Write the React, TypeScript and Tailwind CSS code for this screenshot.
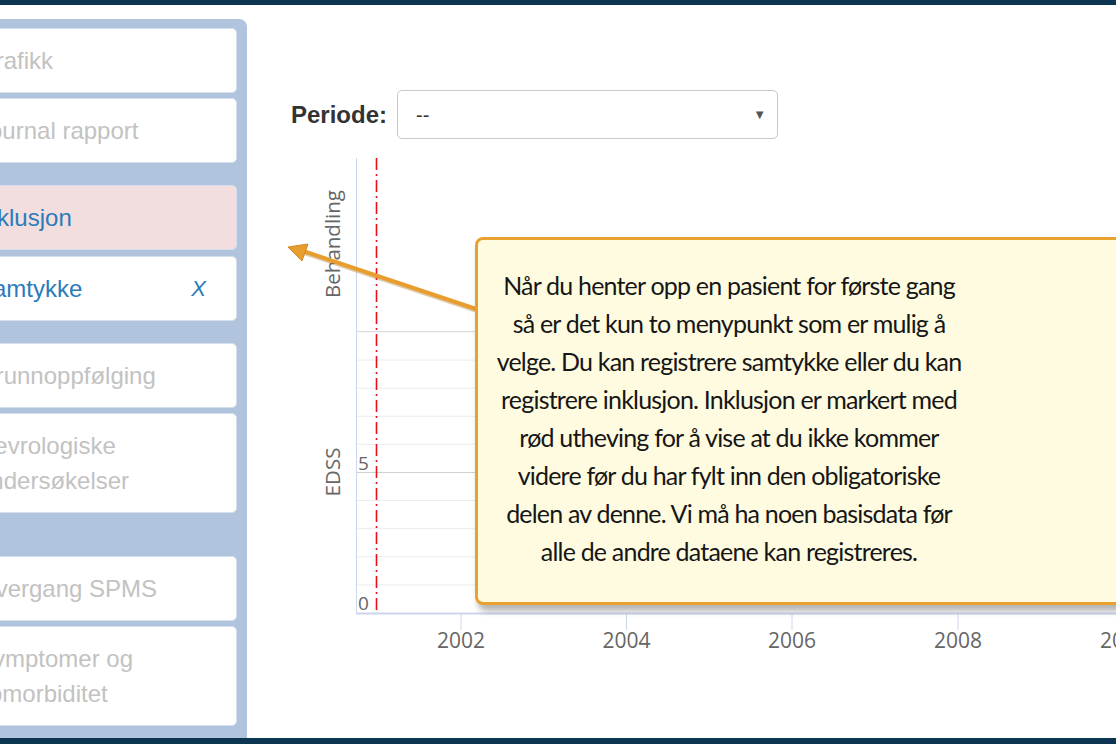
import React from "react";

type NavItem = {
  lines: string[];
  tone: "muted" | "active" | "danger";
  removable?: boolean;
};

// groups of menu cards, with the blue gap above each group
const GROUPS: { gap: string; space: string; items: NavItem[] }[] = [
  {
    gap: "mt-[9px]",
    space: "mt-[5px]",
    items: [
      { lines: ["Grafikk"], tone: "muted" },
      { lines: ["Journal rapport"], tone: "muted" },
    ],
  },
  {
    gap: "mt-[22px]",
    space: "mt-[6px]",
    items: [
      { lines: ["Inklusjon"], tone: "danger" },
      { lines: ["Samtykke"], tone: "active", removable: true },
    ],
  },
  {
    gap: "mt-[22px]",
    space: "mt-[5px]",
    items: [
      { lines: ["Grunnoppfølging"], tone: "muted" },
      { lines: ["Nevrologiske", "undersøkelser"], tone: "muted" },
    ],
  },
  {
    gap: "mt-[43px]",
    space: "mt-[5px]",
    items: [
      { lines: ["Overgang SPMS"], tone: "muted" },
      { lines: ["Symptomer og", "komorbiditet"], tone: "muted" },
    ],
  },
];

const CALLOUT = [
  "Når du henter opp en pasient for første gang",
  "så er det kun to menypunkt som er mulig å",
  "velge. Du kan registrere samtykke eller du kan",
  "registrere inklusjon. Inklusjon er markert med",
  "rød utheving for å vise at du ikke kommer",
  "videre før du har fylt inn den obligatoriske",
  "delen av denne. Vi må ha noen basisdata før",
  "alle de andre dataene kan registreres.",
];

const YEARS = [
  { label: "2002", x: 461 },
  { label: "2004", x: 626.5 },
  { label: "2006", x: 792 },
  { label: "2008", x: 958 },
  { label: "2010", x: 1124 },
];

function NavCard({ item, space }: { item: NavItem; space: string }) {
  const bg = item.tone === "danger" ? "bg-[#f2dede]" : "bg-white";
  const color = item.tone === "muted" ? "text-[#c2c2c2]" : "text-[#2b7bba]";
  return (
    <div
      className={`${space} ${bg} ${color} rounded-[5px] border border-[#d5dfeb] pl-[16px] pr-[30px] py-[14px] flex items-center justify-between text-[24px] leading-[35px]`}
    >
      <div>
        {item.lines.map((l) => (
          <div key={l} className="whitespace-nowrap">
            {l}
          </div>
        ))}
      </div>
      {item.removable && <span className="italic text-[22px]">X</span>}
    </div>
  );
}

function Chart() {
  const grid = Array.from({ length: 10 }, (_, i) => 613 - (i + 1) * 28.1);
  return (
    <svg width="825" height="520" className="block overflow-visible">
      <g transform="translate(-291,-150)" fontFamily="'Open Sans', sans-serif">
        {/* behandling band bottom */}
        <line x1="356" y1="331.5" x2="1116" y2="331.5" stroke="#cfcfcf" />
        {grid.map((y, i) => (
          <line
            key={i}
            x1="356"
            y1={y}
            x2="1116"
            y2={y}
            stroke={i === 4 ? "#d0d0d0" : "#ececec"}
          />
        ))}
        <line x1="356.5" y1="158" x2="356.5" y2="613" stroke="#ccd6eb" />
        <line x1="356" y1="613.5" x2="1116" y2="613.5" stroke="#ccd6eb" strokeWidth="2" />
        {YEARS.map((t) => (
          <g key={t.label}>
            <line x1={t.x} y1="614" x2={t.x} y2="630" stroke="#ccd6eb" />
            <text x={t.x} y="648" textAnchor="middle" fontSize="21" fill="#666">
              {t.label}
            </text>
          </g>
        ))}
        <line
          x1="376.5"
          y1="158"
          x2="376.5"
          y2="613"
          stroke="#e8101a"
          strokeWidth="1.6"
          strokeDasharray="12 4 2 4"
        />
        <text x="358" y="470" fontSize="19" fill="#666">
          5
        </text>
        <text x="358" y="610" fontSize="19" fill="#666">
          0
        </text>
        <text
          transform="translate(340,244) rotate(-90)"
          textAnchor="middle"
          fontSize="20.5"
          fill="#666"
        >
          Behandling
        </text>
        <text
          transform="translate(340,472) rotate(-90)"
          textAnchor="middle"
          fontSize="20.5"
          fill="#666"
        >
          EDSS
        </text>
      </g>
    </svg>
  );
}

export default function App() {
  return (
    <div className="relative w-[1116px] h-[744px] overflow-hidden bg-white flex flex-col font-['Liberation_Sans',Arial,sans-serif]">
      <div className="h-[5px] shrink-0 bg-[#0c3552]" />

      <div className="flex flex-1 min-h-0">
        {/* left menu, scrolled so its left edge is cut */}
        <aside className="mt-[14px] w-[247px] shrink-0 bg-[#b0c4de] rounded-tr-[8px] overflow-hidden">
          <div className="-ml-[40px] w-[277px] flex flex-col">
            {GROUPS.map((g, gi) => (
              <div key={gi} className={g.gap}>
                {g.items.map((it, i) => (
                  <NavCard key={it.lines[0]} item={it} space={i === 0 ? "" : g.space} />
                ))}
              </div>
            ))}
          </div>
        </aside>

        <main className="flex-1 pl-[44px]">
          <div className="mt-[85px] flex items-center gap-[10px]">
            <span className="font-bold text-[24px] text-[#333]">Periode:</span>
            <div className="w-[381px] h-[49px] rounded-[5px] border border-[#c8c8c8] flex items-center justify-between pl-[18px] pr-[11px] text-[20px] text-[#333]">
              <span>--</span>
              <span className="text-[13px] text-[#555]">▼</span>
            </div>
          </div>
          <div className="mt-[11px]">
            <Chart />
          </div>
        </main>
      </div>

      <div className="h-[6px] shrink-0 bg-[#0c3552]" />

      {/* pointer arrow */}
      <svg className="absolute inset-0 w-full h-full pointer-events-none">
        <line x1="482" y1="312" x2="303" y2="252" stroke="#a86a12" strokeWidth="5.5" opacity="0.35" />
        <line x1="482" y1="311" x2="303" y2="251" stroke="#e89e2f" strokeWidth="4" />
        <polygon points="288,247 308,244 302,261" fill="#e89e2f" stroke="#d08a20" strokeWidth="1" />
      </svg>

      {/* callout */}
      <div className="absolute left-[475px] top-[237px] w-[680px] h-[368px] rounded-[8px] border-[3px] border-[#e9a130] bg-[#fefbe0] shadow-[3px_6px_6px_rgba(0,0,0,0.3)]">
        <div className="w-[502px] pt-[26px] text-center text-[25px] tracking-[-0.8px] leading-[38px] text-[#161616] font-['Lato',sans-serif]">
          {CALLOUT.map((l) => (
            <div key={l} className="whitespace-nowrap">
              {l}
            </div>
          ))}
        </div>
      </div>
    </div>
  );
}
